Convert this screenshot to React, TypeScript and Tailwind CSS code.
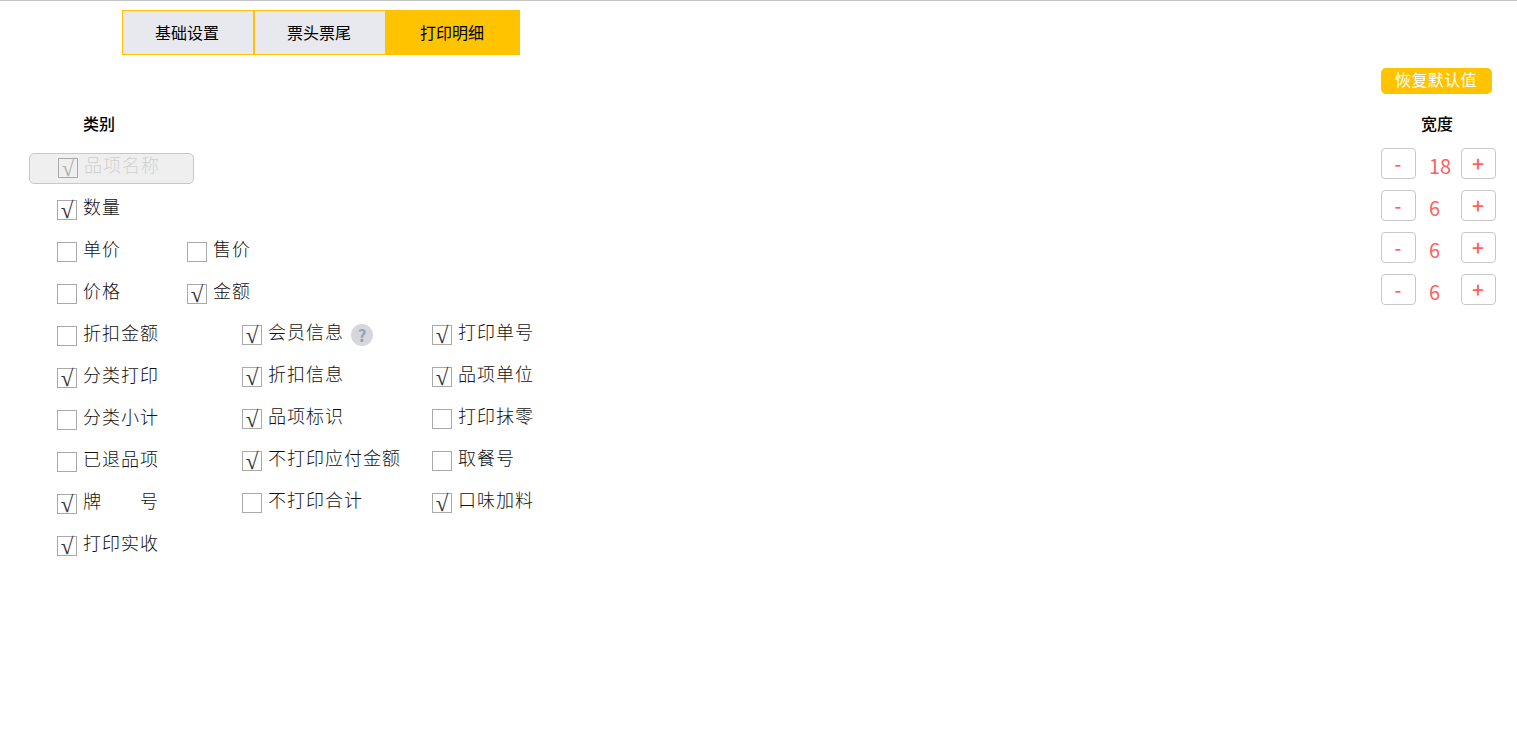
const sans = 'font-["Microsoft_YaHei","Noto_Sans_CJK_SC",sans-serif]';

function Check({ label, on, gray }: { label: string; on?: boolean; gray?: boolean }) {
    return (
        <div className="flex items-start whitespace-pre">
            <span className={`mt-[12px] w-5 h-5 shrink-0 border border-[#a9a9a9] flex items-center justify-center font-["Liberation_Serif",serif] text-[23px] leading-none ${gray ? 'text-[#b0b0b0]' : 'text-[#333]'}`}>
                {on ? '√' : ''}
            </span>
            <span className={`ml-[6px] mt-[6px] text-[18px] leading-[25px] tracking-[1px] font-light ${gray ? 'text-[#cfcfcf]' : 'text-[#111]'}`}>
                {label}
            </span>
        </div>
    );
}

function Stepper({ value }: { value: number }) {
    return (
        <div className="flex items-start h-[42px]">
            <button className="w-[35px] h-[31px] pb-[3px] pr-px border border-[#c8c8c8] rounded-[4px] text-[#ff5f5f] text-[19px] font-medium leading-none">-</button>
            <span className="ml-[13px] w-[32px] mt-[3px] text-[20px] leading-[30px] text-[#ff5f5f]">{value}</span>
            <button className="w-[35px] h-[31px] pr-px border border-[#c8c8c8] rounded-[4px] text-[#ff5f5f] text-[21px] font-medium leading-none">+</button>
        </div>
    );
}

const threeCols: [string, boolean, string, boolean, string, boolean][] = [
    ['折扣金额', false, '会员信息', true, '打印单号', true],
    ['分类打印', true, '折扣信息', true, '品项单位', true],
    ['分类小计', false, '品项标识', true, '打印抹零', false],
    ['已退品项', false, '不打印应付金额', true, '取餐号', false],
    ['牌\u3000\u3000号', true, '不打印合计', false, '口味加料', true],
];

export default function App() {
    return (
        <div className={`min-h-screen bg-white border-t border-[#c4c4c4] ${sans}`}>
            {/* Tabs */}
            <div className="flex pl-[122px] pt-[9px]">
                <div className="w-[132px] h-[45px] pr-[2px] pb-px border border-[#ffc300] bg-[#e8e9ee] flex items-center justify-center text-[16px] text-black">基础设置</div>
                <div className="w-[132px] h-[45px] pr-[2px] pb-px border border-[#ffc300] bg-[#e8e9ee] flex items-center justify-center text-[16px] text-black">票头票尾</div>
                <div className="w-[134px] h-[45px] pr-[2px] pb-px bg-[#ffc300] flex items-center justify-center text-[16px] text-black">打印明细</div>
            </div>

            <div className="flex justify-between pr-[21px]">
                {/* Left: categories */}
                <div className="pl-[57px] pt-[58px]">
                    <div className="pl-[26px] h-[30px] text-[16px] font-medium leading-[21px] text-black">类别</div>
                    <div className="-ml-[28px] mt-[10px] w-[165px] h-[31px] pl-[28px] -mb-[1px] border border-[#c8c8c8] rounded-[5px] bg-[#efefef] flex">
                        <div className="-mt-[8px]"><Check label="品项名称" on gray /></div>
                    </div>
                    <div className="h-[42px] mt-[5px]"><Check label="数量" on /></div>
                    <div className="h-[42px] flex">
                        <div className="w-[130px]"><Check label="单价" /></div>
                        <Check label="售价" />
                    </div>
                    <div className="h-[42px] flex">
                        <div className="w-[130px]"><Check label="价格" /></div>
                        <Check label="金额" on />
                    </div>
                    {threeCols.map(([a, aOn, b, bOn, c, cOn], i) => (
                        <div key={a} className="h-[42px] flex">
                            <div className="w-[185px]"><Check label={a} on={aOn} /></div>
                            <div className="w-[190px] flex -mt-px">
                                <Check label={b} on={bOn} />
                                {i === 0 && (
                                    <span className="ml-[7px] mt-[11px] w-[22px] h-[22px] rounded-full bg-[#d6d7dc] flex items-center justify-center text-[17px] font-bold text-[#9a9fb8]">?</span>
                                )}
                            </div>
                            <div className="-mt-px"><Check label={c} on={cOn} /></div>
                        </div>
                    ))}
                    <div className="h-[42px]"><Check label="打印实收" on /></div>
                </div>

                {/* Right: widths */}
                <div className="w-[115px] pt-[12px]">
                    <button className="w-[111px] h-[26px] pb-[4px] pr-px rounded-[5px] bg-[#ffc300] text-white text-[16px] tracking-[0.4px] leading-[22px]">恢复默认值</button>
                    <div className="mt-[17px] h-[25px] pr-[3px] text-center text-[16px] font-medium leading-[24px] text-black">宽度</div>
                    <div className="mt-[12px]">
                        <Stepper value={18} />
                        <Stepper value={6} />
                        <Stepper value={6} />
                        <Stepper value={6} />
                    </div>
                </div>
            </div>
        </div>
    );
}
